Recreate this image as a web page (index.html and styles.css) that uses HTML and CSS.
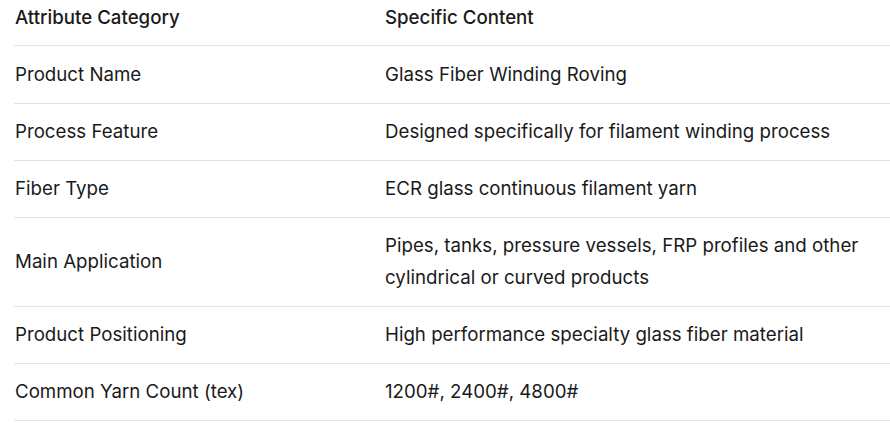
FILE: index.html
```html
<!DOCTYPE html>
<html>
<head>
<meta charset="utf-8">
<link rel="stylesheet" href="styles.css">
</head>
<body>
<table class="spec">
  <thead>
    <tr><th class="c1">Attribute Category</th><th>Specific Content</th></tr>
  </thead>
  <tbody>
    <tr><td>Product Name</td><td>Glass Fiber Winding Roving</td></tr>
    <tr><td>Process Feature</td><td>Designed specifically for filament winding process</td></tr>
    <tr><td>Fiber Type</td><td>ECR glass continuous filament yarn</td></tr>
    <tr><td>Main Application</td><td>Pipes, tanks, pressure vessels, FRP profiles and other cylindrical or curved products</td></tr>
    <tr><td>Product Positioning</td><td>High performance specialty glass fiber material</td></tr>
    <tr><td>Common Yarn Count (tex)</td><td>1200#, 2400#, 4800#</td></tr>
  </tbody>
</table>
</body>
</html>
```
FILE: styles.css
```css
html, body {
  margin: 0;
  padding: 0;
  background: #ffffff;
}
body {
  font-family: Inter, "Noto Sans", sans-serif;
  font-size: 18.7px;
  color: #1a1a1a;
}
.spec {
  margin-left: 14px;
  width: 876px;
  border-collapse: collapse;
  table-layout: fixed;
}
.spec th, .spec td {
  text-align: left;
  vertical-align: middle;
  line-height: 32px;
  padding: 12px 0 12px 1px;
  border-bottom: 1px solid #e3e3e3;
}
.spec th {
  font-weight: 500;
  padding-top: 2px;
  padding-bottom: 11px;
}
.spec tbody tr:first-child td {
  padding-top: 13px;
}
.spec .c1 {
  width: 369px;
}
```
